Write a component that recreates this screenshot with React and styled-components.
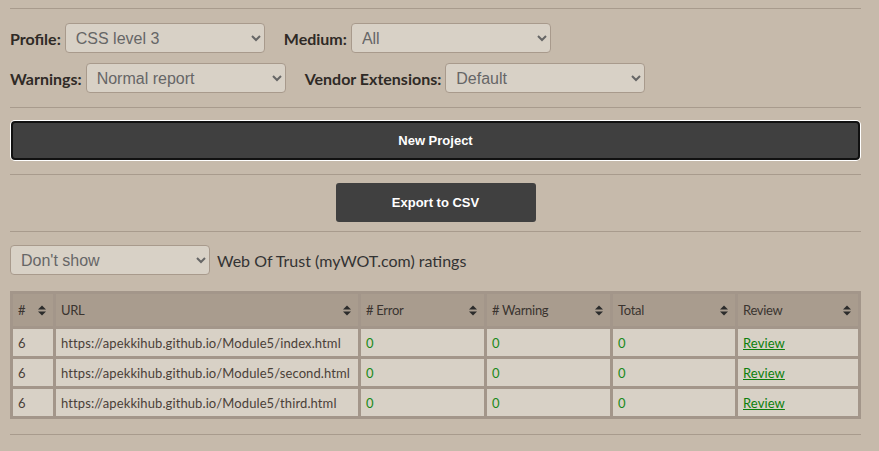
import React from "react";
import styled, { createGlobalStyle } from "styled-components";

const Global = createGlobalStyle`
  html, body { margin: 0; padding: 0; background: #c6baab; }
  body { font-family: Lato, "Noto Sans", sans-serif; color: #2f2a26; }
`;

const Page = styled.div`
  width: 851px;
  padding: 8px 10px 0;
  display: flex;
  flex-direction: column;
`;

const Rule = styled.div`
  height: 1px;
  background: #a89b8d;
`;

const Form = styled.div`
  display: flex;
  flex-direction: column;
  gap: 10px;
  padding: 14px 0 14px;
`;

const FormRow = styled.div`
  display: flex;
  align-items: center;
  gap: 19px;
  height: 30px;
`;

const Field = styled.label`
  display: flex;
  align-items: center;
  gap: 4px;
  font-size: 16px;
  font-weight: 700;
  color: #2f2a26;
`;

const Select = styled.select`
  width: ${(p) => p.$w || 200}px;
  height: 30px;
  font-family: "Liberation Sans", Arial, sans-serif;
  font-size: 16px;
  color: #666;
  background-color: #d8d1c6;
  border: 1px solid #a89a8c;
  border-radius: 4px;
  padding: 0 6px;
  outline: none;
`;

const WideButton = styled.button`
  height: 39px;
  width: 849px;
  margin: 13px 1px 14px;
  background: #404040;
  color: #fff;
  border: 2px solid #111;
  border-radius: 4px;
  box-shadow: 0 0 0 1px #fff;
  font-family: "Liberation Sans", Arial, sans-serif;
  font-weight: 700;
  font-size: 13px;
`;

const Center = styled.div`
  display: flex;
  justify-content: center;
  padding: 8px 0 9px;
`;

const Button = styled.button`
  width: 200px;
  height: 39px;
  background: #404040;
  color: #fff;
  border: 0;
  border-radius: 3px;
  font-family: "Liberation Sans", Arial, sans-serif;
  font-weight: 700;
  font-size: 13px;
`;

const WotRow = styled.div`
  display: flex;
  align-items: center;
  gap: 7px;
  padding: 13px 0 16px;
  font-size: 16px;
  color: #333;
`;

const Table = styled.table`
  width: 851px;
  table-layout: fixed;
  border-collapse: separate;
  border-spacing: 3px;
  background: #a3968a;
  font-family: Lato, "Noto Sans", sans-serif;
  margin-bottom: 15px;
`;

const Th = styled.th`
  height: 32px;
  box-sizing: border-box;
  background: #a99c8e;
  font-size: 13px;
  letter-spacing: -0.3px;
  font-weight: 400;
  color: #3a3430;
  text-align: left;
  padding: 0 7px 0 5px;
`;

const ThInner = styled.div`
  display: flex;
  align-items: center;
  justify-content: space-between;
`;

const Td = styled.td`
  height: 27px;
  box-sizing: border-box;
  background: #d8d1c6;
  font-size: 13px;
  letter-spacing: 0.1px;
  color: ${(p) => (p.$ok ? "#1a8a1a" : "#4a4038")};
  padding: 0 5px;
  white-space: nowrap;
`;

const Link = styled.a`
  color: #0c7f0c;
  text-decoration: underline;
`;

const SortIcon = () => (
  <svg width="8" height="11" viewBox="0 0 8 11">
    <path d="M0 4.5 L4 0.5 L8 4.5 Z M0 6.5 L8 6.5 L4 10.5 Z" fill="#2b2b2b" />
  </svg>
);

const cols = [
  { k: "#", w: 40 },
  { k: "URL", w: 302 },
  { k: "# Error", w: 123 },
  { k: "# Warning", w: 123 },
  { k: "Total", w: 122 },
  { k: "Review", w: 120 },
];

const rows = ["index.html", "second.html", "third.html"];

export default function App() {
  return (
    <>
      <Global />
      <Page>
        <Rule />
        <Form>
          <FormRow>
            <Field>
              Profile:
              <Select $w={200} defaultValue="css3">
                <option value="css3">CSS level 3</option>
              </Select>
            </Field>
            <Field>
              Medium:
              <Select $w={200} defaultValue="all">
                <option value="all">All</option>
              </Select>
            </Field>
          </FormRow>
          <FormRow>
            <Field>
              Warnings:
              <Select $w={200} defaultValue="normal">
                <option value="normal">Normal report</option>
              </Select>
            </Field>
            <Field>
              Vendor Extensions:
              <Select $w={200} defaultValue="default">
                <option value="default">Default</option>
              </Select>
            </Field>
          </FormRow>
        </Form>
        <Rule />
        <WideButton>New Project</WideButton>
        <Rule />
        <Center>
          <Button>Export to CSV</Button>
        </Center>
        <Rule />
        <WotRow>
          <Select $w={200} defaultValue="no">
            <option value="no">Don't show</option>
          </Select>
          Web Of Trust (myWOT.com) ratings
        </WotRow>
        <Table>
          <colgroup>
            {cols.map((c) => (
              <col key={c.k} style={{ width: c.w }} />
            ))}
          </colgroup>
          <thead>
            <tr>
              {cols.map((c) => (
                <Th key={c.k}>
                  <ThInner>
                    {c.k}
                    <SortIcon />
                  </ThInner>
                </Th>
              ))}
            </tr>
          </thead>
          <tbody>
            {rows.map((r) => (
              <tr key={r}>
                <Td>6</Td>
                <Td>https://apekkihub.github.io/Module5/{r}</Td>
                <Td $ok>0</Td>
                <Td $ok>0</Td>
                <Td $ok>0</Td>
                <Td>
                  <Link href="#">Review</Link>
                </Td>
              </tr>
            ))}
          </tbody>
        </Table>
        <Rule />
      </Page>
    </>
  );
}
